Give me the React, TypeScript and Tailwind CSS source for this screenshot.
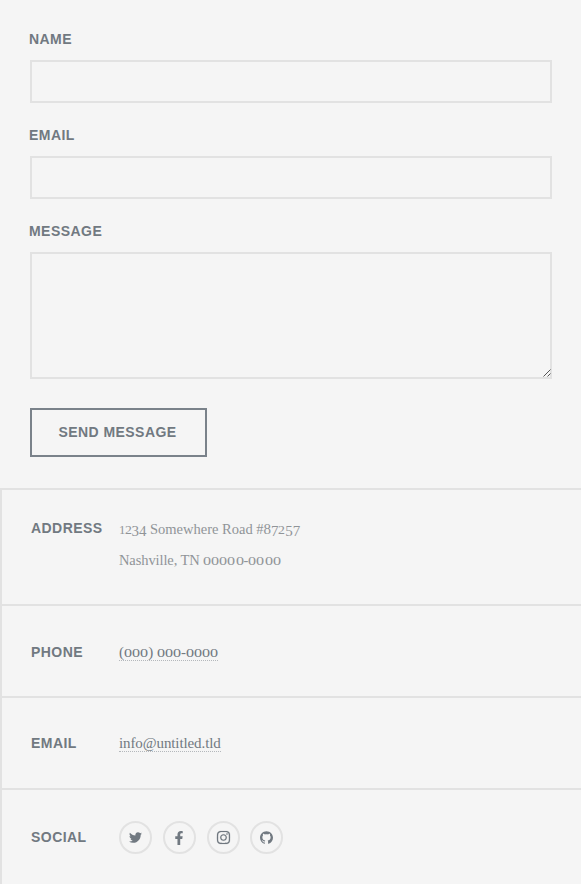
import React from "react";
import { FaFacebookF, FaInstagram, FaTwitter } from "react-icons/fa";
import { SiGithub } from "react-icons/si";

const label =
  "block font-['Liberation_Sans',Arial,sans-serif] text-[14px] leading-[22px] font-bold tracking-[0.45px] uppercase text-[#717981]";
const serif = "font-['Liberation_Serif',Georgia,serif] leading-[31px] whitespace-nowrap";

// Old-style figures: 0-2 sit at x-height, 6 and 8 rise, the others descend.
function Figure({ value }: { value: string }) {
  if ("012".includes(value)) {
    const width = value === "0" ? "w-[8.1px]" : value === "1" ? "w-[5.6px]" : "w-[7px]";
    const scale = value === "0" ? "scale-x-[1.4]" : value === "1" ? "scale-x-[1.1]" : "scale-x-[1.2]";
    return (
      <span className={`inline-block text-[11.5px] leading-none ${width}`}>
        <span className={`inline-block origin-left ${scale}`}>{value}</span>
      </span>
    );
  }
  const drop = "68".includes(value) ? "align-baseline" : "align-[-2px]";
  return <span className={`inline-block w-[7.4px] text-[15px] leading-none ${drop}`}>{value}</span>;
}

function OldStyle({ text }: { text: string }) {
  return (
    <>
      {text.split(/(\d)/).map((part, i) =>
        /^\d$/.test(part) ? <Figure key={i} value={part} /> : <React.Fragment key={i}>{part}</React.Fragment>,
      )}
    </>
  );
}

const socials = [
  { name: "Twitter", Icon: FaTwitter, icon: "size-[13px]" },
  { name: "Facebook", Icon: FaFacebookF, icon: "size-[14px]" },
  { name: "Instagram", Icon: FaInstagram, icon: "size-[15px] stroke-[5px]" },
  { name: "GitHub", Icon: SiGithub, icon: "size-[13px]" },
];

export default function App() {
  return (
    <div className="flex h-[884px] w-full flex-col overflow-hidden bg-[#f5f5f5]">
      <form className="flex h-[488px] shrink-0 flex-col items-start pr-[29px] pl-[30px] pt-[28px]">
        <label htmlFor="name" className={`-ml-px ${label}`}>Name</label>
        <input id="name" className="mt-[10px] h-[43px] w-full border-2 border-[#e2e2e2] bg-transparent outline-none" />
        <label htmlFor="email" className={`mt-[21px] -ml-px ${label}`}>Email</label>
        <input id="email" className="mt-[10px] h-[43px] w-full border-2 border-[#e2e2e2] bg-transparent outline-none" />
        <label htmlFor="message" className={`mt-[21px] -ml-px ${label}`}>Message</label>
        <div className="relative mt-[10px] h-[127px] w-full shrink-0">
          <textarea id="message" className="block h-full w-full resize-none border-2 border-[#e2e2e2] bg-transparent outline-none" />
          <svg className="absolute right-[1px] bottom-[2px]" width="8" height="8" viewBox="0 0 8 8" fill="none" stroke="#555" strokeWidth="1">
            <path d="M0.5 7.5 7.5 0.5M4.5 7.5 7.5 4.5" />
          </svg>
        </div>
        <button type="button" className="mt-[29px] flex h-[49px] w-[177px] shrink-0 items-center justify-center border-2 border-[#7a828a] pr-[2px] pb-[2px]">
          <span className={label}>Send Message</span>
        </button>
      </form>
      <section className="flex flex-1 flex-col border-l-2 border-[#e2e2e2]">
        <div className="flex h-[116px] shrink-0 border-t-2 border-[#e2e2e2] pt-[24px] pl-[29px]">
          <h3 className={`mt-[3px] w-[88px] ${label}`}>Address</h3>
          <p className={`text-[14.5px] text-[#909498] ${serif}`}>
            <span className="block"><OldStyle text="1234 Somewhere Road #87257" /></span>
            <span className="block tracking-[-0.1px]"><OldStyle text="Nashville, TN 00000-0000" /></span>
          </p>
        </div>
        <div className="flex h-[92px] shrink-0 border-t-2 border-[#e2e2e2] pt-[35px] pl-[29px]">
          <h3 className={`w-[88px] ${label}`}>Phone</h3>
          <a className={`mt-[4px] h-[16px] border-b border-dotted border-[#b4b8bc] text-[15px] tracking-[-0.1px] text-[#717981] ${serif} !leading-[14px]`}>
            <OldStyle text="(000) 000-0000" />
          </a>
        </div>
        <div className="flex h-[92px] shrink-0 border-t-2 border-[#e2e2e2] pt-[34px] pl-[29px]">
          <h3 className={`w-[88px] ${label}`}>Email</h3>
          <a className={`mt-[4px] h-[16px] border-b border-dotted border-[#b4b8bc] text-[15px] tracking-[-0.1px] text-[#717981] ${serif} !leading-[14px]`}>
            info@untitled.tld
          </a>
        </div>
        <div className="flex flex-1 border-t-2 border-[#e2e2e2] pt-[31px] pl-[29px]">
          <h3 className={`mt-[5px] w-[88px] ${label}`}>Social</h3>
          <ul className="flex gap-[10.8px]">
            {socials.map(({ name, Icon, icon }) => (
              <li key={name} aria-label={name} className="flex size-[33px] items-center justify-center rounded-full border-2 border-[#e2e2e2] text-[#717981]">
                <Icon className={icon} />
              </li>
            ))}
          </ul>
        </div>
      </section>
    </div>
  );
}
